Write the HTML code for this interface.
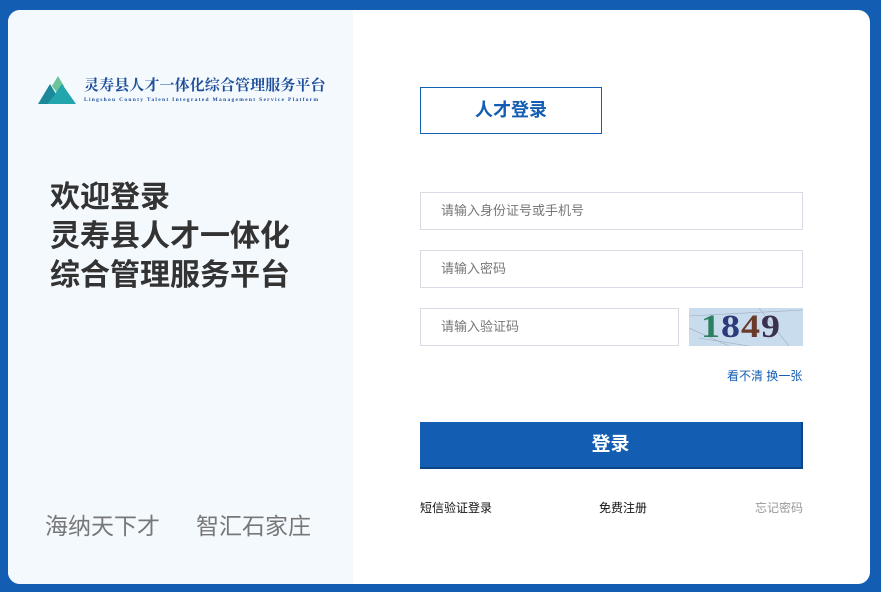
<!DOCTYPE html>
<html><head><meta charset="utf-8"><style>
*{margin:0;padding:0;box-sizing:border-box}
body{width:881px;height:592px;background:#135db2;font-family:"Liberation Sans","Noto Sans CJK SC",sans-serif;position:relative;overflow:hidden}
.card{position:absolute;left:8px;top:10px;width:862px;height:574px;background:#fff;border-radius:12px;overflow:hidden}
.left{position:absolute;left:0;top:0;width:345px;height:574px;background:#f4f9fe}
.abs{position:absolute}
.inp{position:absolute;border:1px solid #d8dbe3;background:#fff;height:38px;font-size:13px;color:#777;padding-left:20px;line-height:36px}
</style></head><body>
<div class="card">
<div class="left">
<svg class="abs" style="left:30px;top:64px" width="40" height="30" viewBox="0 0 40 30">
<polygon points="0,30 12,10 18,20 10,30" fill="#1a8a9a"/>
<polygon points="14,12 20,2 26,12 20,20" fill="#6dc39a"/>
<polygon points="10,30 24,10 38,30" fill="#22a5ad"/>
</svg>
<div class="abs" style="left:76px;top:64px;font-size:15px;font-weight:bold;color:#1e4e9a;font-family:'Noto Serif CJK SC',serif;letter-spacing:0.1px">灵寿县人才一体化综合管理服务平台</div>
<div class="abs" style="left:76px;top:87px;font-size:5.5px;color:#1e4e9a;letter-spacing:1.3px;font-family:'Liberation Serif',serif;font-weight:bold">Lingshou County Talent Integrated Management Service Platform</div>
<div class="abs" style="left:42px;top:168px;font-size:30px;font-weight:bold;color:#333;line-height:39px">欢迎登录<br>灵寿县人才一体化<br>综合管理服务平台</div>
<div class="abs" style="left:37px;top:497px;font-size:23px;color:#777">海纳天下才<span style="display:inline-block;width:36px"></span>智汇石家庄</div>
</div>
<div class="abs" style="left:412px;top:77px;width:182px;height:47px;border:1px solid #135db2;color:#135db2;font-size:18px;font-weight:bold;text-align:center;line-height:45px">人才登录</div>
<div class="inp" style="left:412px;top:182px;width:383px">请输入身份证号或手机号</div>
<div class="inp" style="left:412px;top:240px;width:383px">请输入密码</div>
<div class="inp" style="left:412px;top:298px;width:259px">请输入验证码</div>
<div class="abs" style="left:681px;top:298px;width:114px;height:38px;background:#c9dcee;overflow:hidden">
<svg width="114" height="38" style="position:absolute;left:0;top:0"><path d="M0 8 L114 2 M10 30 L60 38 M70 0 L100 38 M0 20 L40 38" stroke="#9ab" stroke-width="0.6" fill="none"/></svg>
<div class="abs" style="left:12px;top:0;font-family:'Liberation Serif',serif;font-size:38px;font-weight:bold;line-height:38px;letter-spacing:1px;transform:scaleY(0.85)"><span style="color:#2a8060">1</span><span style="color:#2c3a7a">8</span><span style="color:#6a3a2a">4</span><span style="color:#3a3050">9</span></div>
</div>
<div class="abs" style="left:719px;top:357px;font-size:12px;color:#135db2">看不清 换一张</div>
<div class="abs" style="left:412px;top:412px;width:383px;height:47px;background:#135db2;border-right:2px solid #0c4585;border-bottom:2px solid #0c4585;color:#fff;font-size:19px;font-weight:bold;text-align:center;line-height:46px">登录</div>
<div class="abs" style="left:412px;top:489px;font-size:12px;color:#111">短信验证登录</div>
<div class="abs" style="left:591px;top:489px;font-size:12px;color:#111">免费注册</div>
<div class="abs" style="left:747px;top:489px;font-size:12px;color:#999">忘记密码</div>
</div>
</body></html>
